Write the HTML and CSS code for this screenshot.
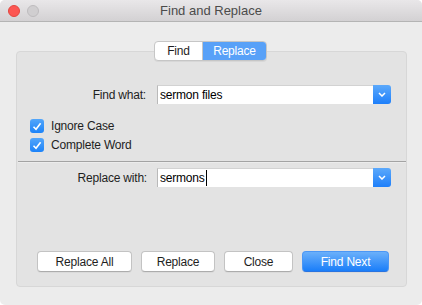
FILE: index.html
```html
<!DOCTYPE html>
<html lang="en">
<head>
  <meta charset="UTF-8">
  <meta name="viewport" content="width=device-width, initial-scale=1.0">
  <title>Find and Replace</title>
  <link rel="stylesheet" href="styles.css">
</head>
<body>
  <div class="window">
    <div class="titlebar">
      <div class="lights">
        <span class="light close-light"></span>
        <span class="light off-light"></span>
      </div>
      <div class="title">Find and Replace</div>
    </div>

    <div class="content">
      <div class="tabs">
        <span class="tab">Find</span>
        <span class="tab active">Replace</span>
      </div>

      <div class="group">
        <div class="row">
          <label class="label">Find what:</label>
          <div class="combo">
            <div class="field">sermon files</div>
            <div class="combo-btn">
              <svg width="8" height="5" viewBox="0 0 8 5"><path d="M1 1 L4 4 L7 1" fill="none" stroke="#fff" stroke-width="1.5"/></svg>
            </div>
          </div>
        </div>

        <div class="checks">
          <div class="check">
            <span class="box"><svg width="10" height="9" viewBox="0 0 10 9"><path d="M1.5 4.8 L4 7.3 L8.6 1.2" fill="none" stroke="#fff" stroke-width="1.6"/></svg></span>
            Ignore Case
          </div>
          <div class="check">
            <span class="box"><svg width="10" height="9" viewBox="0 0 10 9"><path d="M1.5 4.8 L4 7.3 L8.6 1.2" fill="none" stroke="#fff" stroke-width="1.6"/></svg></span>
            Complete Word
          </div>
        </div>

        <div class="separator"></div>

        <div class="row replace-row">
          <label class="label">Replace with:</label>
          <div class="combo">
            <div class="field">sermons<span class="caret"></span></div>
            <div class="combo-btn">
              <svg width="8" height="5" viewBox="0 0 8 5"><path d="M1 1 L4 4 L7 1" fill="none" stroke="#fff" stroke-width="1.5"/></svg>
            </div>
          </div>
        </div>

        <div class="buttons">
          <button class="btn w-all">Replace All</button>
          <button class="btn w-replace">Replace</button>
          <button class="btn w-close">Close</button>
          <button class="btn primary w-next">Find Next</button>
        </div>
      </div>
    </div>
  </div>
</body>
</html>
```

FILE: styles.css
```css
html, body {
  margin: 0;
  padding: 0;
  background: #fff;
}

body {
  font-family: "Liberation Sans", Arial, sans-serif;
  font-size: 12px;
  letter-spacing: -0.2px;
  color: #1e1e1e;
}

.window {
  width: 422px;
  height: 305px;
  background: #ececec;
  border-radius: 5px;
  overflow: hidden;
}

/* Title bar */
.titlebar {
  height: 21px;
  border-bottom: 1px solid #b4b4b4;
  background: linear-gradient(#e9e7e9, #d3d1d3);
  display: flex;
  align-items: center;
}

.lights {
  display: flex;
  gap: 7px;
  padding-left: 8px;
}

.light {
  width: 12px;
  height: 12px;
  border-radius: 50%;
  box-sizing: border-box;
}

.close-light {
  background: #fc5652;
  border: 1px solid #e2463f;
}

.off-light {
  background: #d0ced0;
  border: 1px solid #bdbbbd;
}

.title {
  flex: 1;
  text-align: center;
  margin-left: -39px;
  color: #4b4b4b;
  font-size: 13px;
  letter-spacing: 0;
}

/* Content */
.content {
  padding-top: 19px;
}

.tabs {
  position: relative;
  z-index: 1;
  display: flex;
  width: 113px;
  height: 20px;
  margin-left: 154px;
  border: 1px solid #c6c6c6;
  border-radius: 4px;
  box-sizing: border-box;
  overflow: hidden;
  background: #fff;
  box-shadow: 0 1px 0 rgba(0, 0, 0, 0.05);
}

.tab {
  display: flex;
  align-items: center;
  justify-content: center;
  line-height: 18px;
  color: #1e1e1e;
}

.tab:first-child {
  width: 47px;
  border-right: 1px solid #c6c6c6;
}

.tab.active {
  flex: 1;
  background: #58a1f8;
  color: #fff;
}

.group {
  margin: -10px 15px 0 16px;
  height: 236px;
  box-sizing: border-box;
  border: 1px solid #d7d7d7;
  border-radius: 4px;
  background: #e3e3e3;
  padding: 33px 0 14px 0;
  display: flex;
  flex-direction: column;
}

.row {
  display: flex;
  align-items: center;
  height: 19px;
}

.label {
  width: 129px;
  text-align: right;
  margin-right: 11px;
}

.combo {
  flex: 1;
  margin-right: 15px;
  display: flex;
  height: 19px;
}

.field {
  flex: 1;
  background: #fff;
  border-left: 1px solid #b9b9b9;
  border-top: 1px solid #d2d2d2;
  box-sizing: border-box;
  padding-left: 2px;
  line-height: 17px;
  color: #000;
  display: flex;
  align-items: center;
}

.caret {
  display: inline-block;
  width: 1px;
  height: 16px;
  background: #000;
  margin-left: 1px;
}

.combo-btn {
  width: 18px;
  background: linear-gradient(#5ca9fb, #1e7ffa);
  border-radius: 0 3px 3px 0;
  display: flex;
  align-items: center;
  justify-content: center;
}

.checks {
  margin-top: 15px;
  padding-left: 13px;
}

.check {
  display: flex;
  align-items: center;
  height: 14px;
  margin-bottom: 5px;
  color: #1e1e1e;
}

.check:last-child {
  margin-bottom: 0;
}

.box {
  width: 14px;
  height: 14px;
  border-radius: 3px;
  background: linear-gradient(#53a6fa, #1c83f9);
  margin-right: 7px;
  display: flex;
  align-items: center;
  justify-content: center;
}

.separator {
  margin: 9px 0 0 1px;
  height: 1px;
  background: #a3a3a3;
  box-shadow: 0 1px 0 #ececec;
}

.replace-row {
  margin-top: 6px;
}

.replace-row .label {
  width: 130px;
  margin-right: 10px;
}

/* Buttons */
.buttons {
  margin-top: auto;
  padding-left: 20px;
  display: flex;
  gap: 9px;
}

.btn {
  height: 21px;
  font-family: "Liberation Sans", Arial, sans-serif;
  font-size: 12px;
  letter-spacing: -0.2px;
  color: #1e1e1e;
  background: #fff;
  border: 1px solid #c3c3c3;
  border-bottom-color: #acacac;
  border-radius: 4px;
  padding: 0;
  box-shadow: 0 1px 0 rgba(0, 0, 0, 0.04);
}

.w-all { width: 95px; }
.w-replace { width: 74px; }
.w-close { width: 69px; }
.w-next { width: 87px; }

.btn.primary {
  color: #fff;
  background: linear-gradient(#6bb0fa, #1a7ef9);
  border-color: #4b97f5;
  border-bottom-color: #2a74e0;
}
```
